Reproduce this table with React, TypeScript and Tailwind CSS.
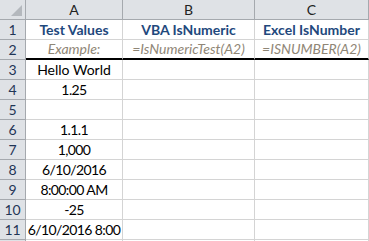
import React from "react";

const rows: { a: string; b?: string; c?: string; kind?: "head" | "example" | "num" | "blank" }[] = [
  { a: "Test Values", b: "VBA IsNumeric", c: "Excel IsNumber", kind: "head" },
  { a: "Example:", b: "=IsNumericTest(A2)", c: "=ISNUMBER(A2)", kind: "example" },
  { a: "Hello World" },
  { a: "1.25", kind: "num" },
  { a: "" },
  { a: "1.1.1", kind: "num" },
  { a: "1,000", kind: "num" },
  { a: "6/10/2016", kind: "num" },
  { a: "8:00:00 AM", kind: "num" },
  { a: "-25", kind: "num" },
  { a: "6/10/2016 8:00", kind: "num" },
  { a: "", kind: "blank" },
];

export default function App() {
  const font = { fontFamily: "Lato, 'Open Sans', sans-serif" };
  return (
    <div className="w-[369px] h-[241px] overflow-hidden bg-white" style={font}>
      <div className="grid grid-cols-[26px_97px_132px_114px] auto-rows-[20px]">
        <div className="relative bg-[#dfe2e6] border-r border-b border-[#a5a9ae]">
          <div
            className="absolute right-[3px] bottom-[3px] w-[11px] h-[11px] bg-[#b4b8bd]"
            style={{ clipPath: "polygon(100% 0, 100% 100%, 0 100%)" }}
          />
        </div>
        {["A", "B", "C"].map((l) => (
          <div
            key={l}
            className="flex items-center justify-center bg-[#dfe2e6] border-r border-b border-[#a5a9ae] text-[14px] text-[#222] leading-none pt-[1px]"
          >
            {l}
          </div>
        ))}
        {rows.map((r, i) => {
          const n = i + 1;
          const thick = r.kind === "example";
          const cellBorder = thick
            ? "border-r border-r-[#d4d4d4] border-b-2 border-b-black"
            : "border-r border-b border-[#d4d4d4]";
          const textCls =
            r.kind === "head"
              ? "font-bold text-[#1f497d]"
              : r.kind === "example"
              ? "italic text-[#8f8676]"
              : r.kind === "num"
              ? "text-black tracking-[-0.6px]"
              : "text-black";
          return (
            <React.Fragment key={n}>
              <div className="flex items-center justify-center bg-[#dfe2e6] border-r border-b border-[#a5a9ae] text-[14px] text-[#1f3556] leading-none">
                {r.kind === "blank" ? "" : n}
              </div>
              <div className={`flex items-end justify-center pb-[1px] ${cellBorder} text-[14px] leading-[17px] whitespace-nowrap ${textCls}`}>
                {r.a}
              </div>
              <div className={`flex items-end justify-center pb-[1px] ${cellBorder} text-[14px] leading-[17px] whitespace-nowrap ${textCls}`}>
                {r.b ?? ""}
              </div>
              <div className={`flex items-end justify-center pb-[1px] ${cellBorder} text-[14px] leading-[17px] whitespace-nowrap ${textCls}`}>
                {r.c ?? ""}
              </div>
            </React.Fragment>
          );
        })}
      </div>
    </div>
  );
}
